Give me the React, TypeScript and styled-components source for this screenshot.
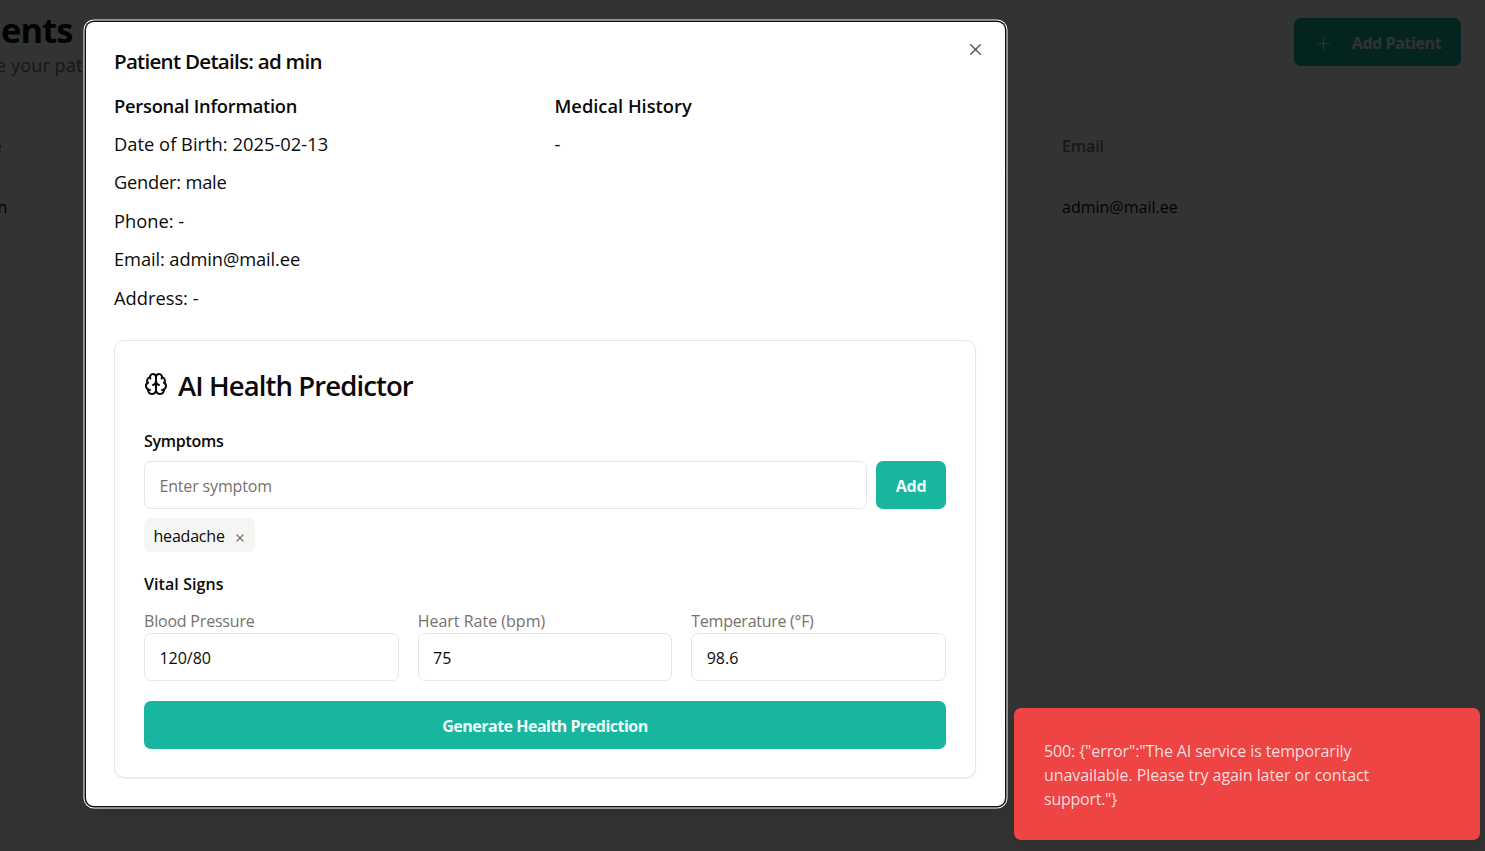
import React from "react";
import styled, { createGlobalStyle } from "styled-components";
import { Brain, Plus, X } from "lucide-react";

const Global = createGlobalStyle`
  *, *::before, *::after { box-sizing: border-box; }
  html, body { margin: 0; padding: 0; height: 100%; overflow: hidden; background: #fff; }
  body { font-family: "Open Sans", "Noto Sans", sans-serif; color: #0c0a09; }
  h1, h2, h3, h4, p { margin: 0; }
  button, input { font-family: inherit; color: inherit; }
`;

const Txt = styled.span<{ $ls?: number }>`
  letter-spacing: ${(p) => p.$ls ?? 0}px;
  white-space: nowrap;
`;

const Page = styled.div`
  position: relative;
  width: 1485px;
  height: 851px;
  overflow: hidden;
`;

const Main = styled.main`
  padding: 0 24px 0 0;
`;

const PageHeader = styled.header`
  display: flex;
  justify-content: space-between;
  align-items: flex-start;
  height: 116px;
  padding-top: 8px;
`;

const PageTitle = styled.h1`
  padding-left: 1px;
  font-size: 34.5px;
  line-height: 44px;
  font-weight: 700;
`;

const PageSub = styled.p`
  font-size: 18.3px;
  line-height: 29px;
  margin: -2px 0 0 -4px;
  color: #78716c;
`;

const Button = styled.button<{ $w?: number; $gap?: number }>`
  display: flex;
  align-items: center;
  justify-content: center;
  gap: ${(p) => p.$gap ?? 0}px;
  width: ${(p) => (p.$w ? `${p.$w}px` : "100%")};
  height: 48px;
  flex: none;
  padding: 2px 0 0;
  border: 0;
  border-radius: 7px;
  background: #18b69f;
  color: #f0fdfa;
  font-size: 16px;
  font-weight: 700;
`;

const HeaderAction = styled.div`
  padding-top: 10px;
`;

const TableRow = styled.div<{ $head?: boolean }>`
  display: flex;
  align-items: center;
  height: ${(p) => (p.$head ? 59 : 64)}px;
  padding-top: ${(p) => (p.$head ? 2 : 0)}px;
  border-bottom: ${(p) => (p.$head ? "1px solid #e7e5e4" : "0")};
  font-size: 16px;
  font-weight: ${(p) => (p.$head ? 600 : 400)};
  color: ${(p) => (p.$head ? "#78716c" : "#0c0a09")};
`;

const NameCell = styled.div<{ $shift: number }>`
  width: ${(p) => 1062 + p.$shift}px;
  margin-left: ${(p) => -p.$shift}px;
`;

const Overlay = styled.div`
  position: absolute;
  inset: 0;
  background: rgba(0, 0, 0, 0.8);
`;

const Dialog = styled.section`
  position: absolute;
  left: 86px;
  top: 22px;
  width: 919px;
  height: 784px;
  padding: 25px 29px 0 28px;
  background: #fff;
  border-radius: 8px;
  box-shadow: 0 0 0 1.5px #101010, 0 0 0 2.5px #fff, 0 12px 18px -4px rgba(0, 0, 0, 0.1);
`;

const CloseButton = styled.button`
  position: absolute;
  top: 18px;
  right: 20px;
  display: flex;
  padding: 0;
  border: 0;
  background: none;
  color: #555;
`;

const DialogTitle = styled.h2`
  font-size: 20.6px;
  line-height: 28px;
  font-weight: 600;
`;

const Columns = styled.div`
  display: grid;
  grid-template-columns: 1fr 1fr;
  column-gap: 19px;
  margin-top: 16.6px;
  height: 226.4px;
`;

const Column = styled.div`
  display: flex;
  flex-direction: column;
  gap: 9.6px;
  font-size: 18.3px;
  line-height: 28.8px;
`;

const ColumnTitle = styled.h3`
  font-size: 18.3px;
  font-weight: 600;
`;

const Card = styled.section`
  height: 438px;
  padding: 27px 29px;
  border: 1px solid #e7e5e4;
  border-radius: 10px;
  box-shadow: 0 1px 2px rgba(0, 0, 0, 0.06);
  margin-top: 22px;
`;

const CardTitle = styled.h2`
  display: flex;
  align-items: center;
  gap: 10px;
  height: 36px;
  font-size: 27.5px;
  font-weight: 600;
  svg { margin-bottom: 4px; }
`;

const FieldTitle = styled.h4<{ $top: number }>`
  margin-top: ${(p) => p.$top}px;
  font-size: 16px;
  line-height: 24px;
  font-weight: 600;
`;

const SymptomRow = styled.div`
  display: flex;
  gap: 9px;
  margin-top: 8px;
`;

const Input = styled.input<{ $ls?: number }>`
  width: 100%;
  min-width: 0;
  height: 48px;
  padding: 2px 14px 0 14.4px;
  border: 1px solid #e7e5e4;
  border-radius: 7px;
  background: #fff;
  font-size: 16px;
  letter-spacing: ${(p) => p.$ls ?? 0}px;
  outline: none;
  &::placeholder { color: #78716c; opacity: 1; }
`;

const Tag = styled.span`
  display: flex;
  align-items: center;
  gap: 9px;
  width: 111px;
  height: 34px;
  margin-top: 9px;
  padding: 3px 9.5px 0;
  border-radius: 7px;
  background: #f5f5f4;
  font-size: 16px;
`;

const Remove = styled.span`
  color: #78716c;
  padding-top: 3px;
  display: flex;
`;

const Vitals = styled.div`
  display: grid;
  grid-template-columns: repeat(3, 1fr);
  gap: 19px;
  margin: 13px 0 20px;
`;

const Vital = styled.label`
  display: flex;
  flex-direction: column;
  font-size: 16px;
  line-height: 24px;
  color: #78716c;
  input { color: #0c0a09; }
`;

const Toast = styled.div`
  position: absolute;
  left: 1014px;
  top: 708px;
  width: 466px;
  height: 132px;
  padding: 31px 30px;
  border-radius: 7px;
  background: #ef4444;
  box-shadow: 0 12px 18px -4px rgba(0, 0, 0, 0.1);
  color: #fcdcdc;
  font-size: 16px;
  line-height: 24px;
`;

const ToastLine = styled(Txt)`
  display: block;
`;

export default function App() {
  return (
    <Page>
      <Global />
      <Main>
        <PageHeader>
          <div>
            <PageTitle><Txt $ls={-0.9}>ents</Txt></PageTitle>
            <PageSub><Txt>e your pat</Txt></PageSub>
          </div>
          <HeaderAction>
            <Button $w={167} $gap={19}>
              <Plus size={19} strokeWidth={1.5} />
              <Txt $ls={-0.4}>Add Patient</Txt>
            </Button>
          </HeaderAction>
        </PageHeader>
        <TableRow $head>
          <NameCell $shift={7.5}>e</NameCell>
          <Txt $ls={-0.1}>Email</Txt>
        </TableRow>
        <TableRow>
          <NameCell $shift={2.5}>n</NameCell>
          <Txt>admin@mail.ee</Txt>
        </TableRow>
      </Main>
      <Overlay />
      <Dialog>
        <CloseButton aria-label="Close"><X size={19} strokeWidth={1.7} /></CloseButton>
        <DialogTitle><Txt $ls={-0.75}>Patient Details: ad min</Txt></DialogTitle>
        <Columns>
          <Column>
            <ColumnTitle><Txt $ls={-0.23}>Personal Information</Txt></ColumnTitle>
            <Txt $ls={0.03}>Date of Birth: 2025-02-13</Txt>
            <Txt $ls={-0.22}>Gender: male</Txt>
            <Txt>Phone: -</Txt>
            <Txt $ls={-0.1}>Email: admin@mail.ee</Txt>
            <Txt>Address: -</Txt>
          </Column>
          <Column>
            <ColumnTitle><Txt>Medical History</Txt></ColumnTitle>
            <Txt>-</Txt>
          </Column>
        </Columns>
        <Card>
          <CardTitle><Brain size={24} /><Txt $ls={-0.9}>AI Health Predictor</Txt></CardTitle>
          <FieldTitle $top={25}><Txt $ls={-0.27}>Symptoms</Txt></FieldTitle>
          <SymptomRow>
            <Input $ls={-0.15} placeholder="Enter symptom" />
            <Button $w={70}><Txt $ls={-0.25}>Add</Txt></Button>
          </SymptomRow>
          <Tag><Txt $ls={-0.2}>headache</Txt><Remove><X size={12} strokeWidth={2.4} /></Remove></Tag>
          <FieldTitle $top={20}><Txt $ls={0.08}>Vital Signs</Txt></FieldTitle>
          <Vitals>
            <Vital><Txt $ls={-0.2}>Blood Pressure</Txt><Input defaultValue="120/80" /></Vital>
            <Vital><Txt>Heart Rate (bpm)</Txt><Input defaultValue="75" /></Vital>
            <Vital><Txt $ls={-0.27}>Temperature (°F)</Txt><Input defaultValue="98.6" /></Vital>
          </Vitals>
          <Button><Txt $ls={-0.5}>Generate Health Prediction</Txt></Button>
        </Card>
      </Dialog>
      <Toast>
        <ToastLine $ls={-0.12}>500: {'{"error":"The AI service is temporarily'}</ToastLine>
        <ToastLine $ls={-0.07}>unavailable. Please try again later or contact</ToastLine>
        <ToastLine $ls={-0.25}>{'support."}'}</ToastLine>
      </Toast>
    </Page>
  );
}
